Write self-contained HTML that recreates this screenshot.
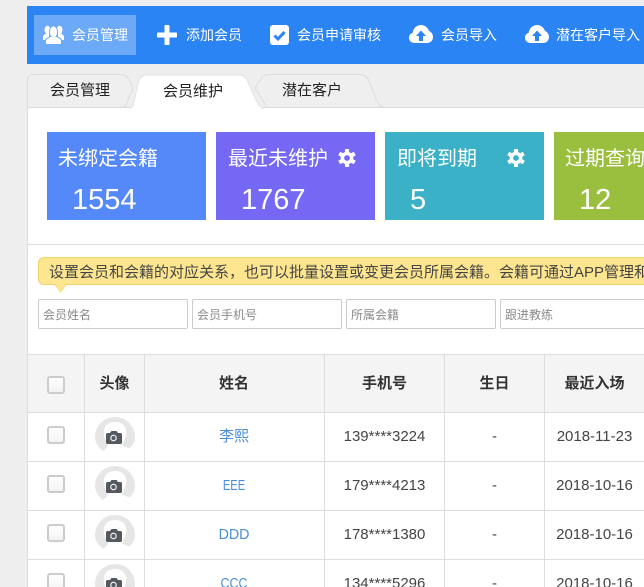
<!DOCTYPE html>
<html lang="zh"><head><meta charset="utf-8">
<style>
html,body{margin:0;padding:0;width:644px;height:587px;overflow:hidden}
#p{width:644px;height:587px;overflow:hidden;position:relative;background-color:#eeeeee;background-image:repeating-linear-gradient(0deg,rgba(255,255,255,.05) 0 1px,transparent 1px 3px);font-family:"Liberation Sans","Noto Sans CJK SC",sans-serif;color:#333}
.a{position:absolute;white-space:nowrap}
.t{font-size:14px;line-height:20px;color:#fff}
.inp{position:absolute;top:299px;height:28px;width:148px;border:1px solid #ccc;border-radius:2px;background:#fff;overflow:hidden}
.inp span{position:absolute;left:4px;top:1px;font-size:12px;line-height:28px;color:#8a8a8a;white-space:nowrap}
.card{position:absolute;top:132px;height:88px;width:159px;color:#fff;overflow:hidden}
.card b{position:absolute;left:11px;top:14px;font-weight:400;font-size:20px;line-height:26px;white-space:nowrap}
.card i{position:absolute;top:50px;font-style:normal;font-size:29px;line-height:36px}
.card svg{position:absolute;left:122px;top:17px}
.hl{position:absolute;width:616px;height:1px;background:#ddd}
.vl{position:absolute;top:354px;width:1px;height:233px;background:#ddd}
.th{position:absolute;top:374px;font-size:15px;line-height:20px;font-weight:700;color:#333;text-align:center;white-space:nowrap}
.td{position:absolute;font-size:15px;line-height:20px;color:#444;text-align:center;white-space:nowrap}
.n{color:#4a8fd8;left:145px;width:178px}
.cb{position:absolute;left:47px;width:14px;height:14px;border:2px solid #ccc;border-radius:3px;background:linear-gradient(#fff,#f3f3f3)}
.av{position:absolute;left:95px;width:40px;height:36px}
</style></head><body><div id="p">

<!-- top bar -->
<div class="a" style="left:27px;top:6px;width:617px;height:58px;background:#2b84f3"></div>
<div class="a" style="left:34px;top:15px;width:102px;height:40px;background:#6ca9f6"></div>

<svg class="a" style="left:43px;top:25px" width="21" height="20" viewBox="0 0 21 20" fill="#fff"><ellipse cx="4.500" cy="5" rx="3" ry="4.200"/><ellipse cx="16.500" cy="5" rx="3" ry="4.200"/><path d="M0 15v-3c0-2 2-2.500 3-3.200h3v6.200z"/><path d="M21 15v-3c0-2-2-2.500-3-3.200h-3v6.200z"/><g stroke="#6ca9f6" stroke-width="1"><ellipse cx="10.500" cy="6.500" rx="4" ry="5.500"/><path d="M2.500 19.500v-3.500c0-2.800 3-3.300 5-4.500h6c2 1.200 5 1.700 5 4.500v3.500z"/></g><ellipse cx="10.500" cy="7.500" rx="3.500" ry="5" /></svg>
<div class="a t" style="left:72px;top:25px">会员管理</div>

<svg class="a" style="left:157px;top:25px" width="20" height="20" fill="#fff"><rect x="7.500" y="0" width="5" height="20" rx=".8"/><rect x="0" y="7.500" width="20" height="5" rx=".8"/></svg>
<div class="a t" style="left:186px;top:25px">添加会员</div>

<svg class="a" style="left:270px;top:25px" width="20" height="20"><rect width="19" height="20" rx="3" fill="#fff"/><path d="M4.500 10.500l3.500 3.500 6.500-7" fill="none" stroke="#2b84f3" stroke-width="3"/></svg>
<div class="a t" style="left:297px;top:25px">会员申请审核</div>

<svg class="a" style="left:409px;top:25px" width="24" height="18" viewBox="0 0 24 18"><path d="M5.500 18C2.400 18 0 15.800 0 12.800c0-2.400 1.500-4.300 3.700-5C4.300 3.200 7.800 0 12 0c3.800 0 7 2.500 8 6 2.400.9 4 3.300 4 6 0 3.400-2.500 6-5.800 6z" fill="#fff"/><path d="M12 5.500l5 5.500h-3v5h-4v-5H7z" fill="#2b84f3"/></svg>
<div class="a t" style="left:441px;top:25px">会员导入</div>

<svg class="a" style="left:525px;top:25px" width="24" height="18" viewBox="0 0 24 18"><path d="M5.500 18C2.400 18 0 15.800 0 12.800c0-2.400 1.500-4.300 3.700-5C4.300 3.200 7.800 0 12 0c3.800 0 7 2.500 8 6 2.400.9 4 3.300 4 6 0 3.400-2.500 6-5.800 6z" fill="#fff"/><path d="M12 5.500l5 5.500h-3v5h-4v-5H7z" fill="#2b84f3"/></svg>
<div class="a t" style="left:556px;top:25px">潜在客户导入</div>

<!-- content -->
<div class="a" style="left:27px;top:108px;width:617px;height:479px;background:#fff;border-left:1px solid #ddd;box-sizing:border-box"></div>

<!-- tabs -->
<div class="a" style="left:28px;top:107px;width:616px;height:1px;background:#ddd"></div>
<svg class="a" style="left:27px;top:72px" width="360" height="37">
<path d="M0.500 35.500V8Q0.500 2.500 7 2.500H93Q100 2.500 103 9L106 16 99 33Q98 35.500 94 35.500z" fill="#efefef" stroke="#dcdcdc"/>
<path d="M228 16L233 8Q236 2.500 242 2.500H333Q339 2.500 342 9L349 27Q352 34.500 357 35.500H240z" fill="#efefef" stroke="#dcdcdc"/>
<path d="M103 36.500Q106 36 107 30L111 12Q113 3 120 3H212Q218 3 221 10L229 28Q232 35 236 36.500z" fill="#fff" stroke="#e3e3e3"/>
<rect x="104" y="35.500" width="131" height="1.500" fill="#fff"/>
</svg>
<div class="a" style="left:50px;top:81px;font-size:15px;line-height:20px;color:#222">会员管理</div>
<div class="a" style="left:163px;top:82px;font-size:15px;line-height:20px;color:#222">会员维护</div>
<div class="a" style="left:282px;top:81px;font-size:15px;line-height:20px;color:#222">潜在客户</div>

<!-- cards -->
<div class="card" style="left:47px;background:#5589f9"><b>未绑定会籍</b><i style="left:25px">1554</i></div>
<div class="card" style="left:216px;background:#7468f5"><b style="left:12px">最近未维护</b><i style="left:25px">1767</i>
<svg width="18" height="18" viewBox="0 0 20 20"><g fill="#fff"><circle cx="10" cy="10" r="7"/><rect x="7.700" y="0" width="4.600" height="20" rx=".8"/><rect x="7.700" y="0" width="4.600" height="20" rx=".8" transform="rotate(60 10 10)"/><rect x="7.700" y="0" width="4.600" height="20" rx=".8" transform="rotate(120 10 10)"/></g><circle cx="10" cy="10" r="3.200" fill="#7468f5"/></svg></div>
<div class="card" style="left:385px;background:#3ab1c6"><b style="left:12px">即将到期</b><i style="left:25px">5</i>
<svg width="18" height="18" viewBox="0 0 20 20"><g fill="#fff"><circle cx="10" cy="10" r="7"/><rect x="7.700" y="0" width="4.600" height="20" rx=".8"/><rect x="7.700" y="0" width="4.600" height="20" rx=".8" transform="rotate(60 10 10)"/><rect x="7.700" y="0" width="4.600" height="20" rx=".8" transform="rotate(120 10 10)"/></g><circle cx="10" cy="10" r="3.200" fill="#3ab1c6"/></svg></div>
<div class="card" style="left:554px;width:90px;background:#9abe3e"><b>过期查询</b><i style="left:25px">12</i></div>

<div class="hl" style="left:28px;top:244px"></div>

<!-- notice -->
<div class="a" style="left:38px;top:257px;width:640px;height:28px;box-sizing:border-box;background:#fde68f;border:1px solid #f2d469;border-radius:6px"></div>
<svg class="a" style="left:55px;top:284px" width="12" height="9"><path d="M0 .5L5.500 8 11 .5z" fill="#fde68f"/><path d="M0 .5L5.500 8 11 .5" fill="none" stroke="#f2d469" stroke-width=".8"/><rect x="1" y="0" width="9" height="1" fill="#fde68f"/></svg>
<div class="a" style="left:49px;top:263px;font-size:15px;line-height:20px;color:#444">设置会员和会籍的对应关系，也可以批量设置或变更会员所属会籍。会籍可通过APP管理和设置</div>

<!-- inputs -->
<div class="inp" style="left:38px"><span>会员姓名</span></div>
<div class="inp" style="left:192px"><span>会员手机号</span></div>
<div class="inp" style="left:346px"><span>所属会籍</span></div>
<div class="inp" style="left:500px"><span>跟进教练</span></div>

<!-- table -->
<div class="a" style="left:28px;top:355px;width:616px;height:57px;background:#f4f4f4"></div>
<div class="hl" style="left:28px;top:354px"></div>
<div class="hl" style="left:28px;top:412px"></div>
<div class="hl" style="left:28px;top:461px"></div>
<div class="hl" style="left:28px;top:510px"></div>
<div class="hl" style="left:28px;top:559px"></div>
<div class="vl" style="left:84px"></div>
<div class="vl" style="left:144px"></div>
<div class="vl" style="left:324px"></div>
<div class="vl" style="left:444px"></div>
<div class="vl" style="left:544px"></div>

<div class="cb" style="top:376px"></div>
<div class="th" style="left:85px;width:59px">头像</div>
<div class="th" style="left:145px;width:178px">姓名</div>
<div class="th" style="left:325px;width:119px">手机号</div>
<div class="th" style="left:445px;width:99px">生日</div>
<div class="th" style="left:545px;width:99px">最近入场</div>

<div class="cb" style="top:426px"></div>
<div class="cb" style="top:475px"></div>
<div class="cb" style="top:524px"></div>
<div class="cb" style="top:573px"></div>

<svg width="0" height="0" style="position:absolute"><defs><symbol id="av" viewBox="0 0 40 36"><path d="M7 33C2 29 0 25 0 19.500A20 19.500 0 0 1 40 19.500C40 25 38 28 35 31L32 34H7z" fill="#e6e6e6"/><path d="M6 35C11 32 13 30 13 27C10 23 8 18 9 13C10 8 14 5 20 5C26 5 30 8 31 13C32 18 30 23 27 27C27 29 30 30 36 32V36H6z" fill="#fff"/><path d="M12.500 16h2.500l1.500-2h5l1.500 2h2.500c.8 0 1.500.7 1.500 1.500v8c0 .8-.7 1.500-1.500 1.500h-13c-.8 0-1.500-.7-1.500-1.500v-8c0-.8.7-1.500 1.500-1.500z" fill="#55585d"/><circle cx="18.500" cy="21" r="2.700" fill="none" stroke="#e4eaf2" stroke-width="1.300"/></symbol></defs></svg>
<svg class="av" style="top:417px"><use href="#av"/></svg>
<svg class="av" style="top:466px"><use href="#av"/></svg>
<svg class="av" style="top:515px"><use href="#av"/></svg>
<svg class="av" style="top:564px"><use href="#av"/></svg>

<div class="td n" style="top:427px">李熙</div>
<div class="td n" style="top:476px;transform:scaleX(.74)">EEE</div>
<div class="td n" style="top:525px;transform:scaleX(.95)">DDD</div>
<div class="td n" style="top:574px;transform:scaleX(.83)">CCC</div>

<div class="td" style="left:325px;width:119px;top:427px">139****3224</div>
<div class="td" style="left:325px;width:119px;top:476px">179****4213</div>
<div class="td" style="left:325px;width:119px;top:525px">178****1380</div>
<div class="td" style="left:325px;width:119px;top:574px">134****5296</div>

<div class="td" style="left:445px;width:99px;top:427px">-</div>
<div class="td" style="left:445px;width:99px;top:476px">-</div>
<div class="td" style="left:445px;width:99px;top:525px">-</div>
<div class="td" style="left:445px;width:99px;top:574px">-</div>

<div class="td" style="left:545px;width:99px;top:427px">2018-11-23</div>
<div class="td" style="left:545px;width:99px;top:476px">2018-10-16</div>
<div class="td" style="left:545px;width:99px;top:525px">2018-10-16</div>
<div class="td" style="left:545px;width:99px;top:574px">2018-10-16</div>

</div></body></html>
